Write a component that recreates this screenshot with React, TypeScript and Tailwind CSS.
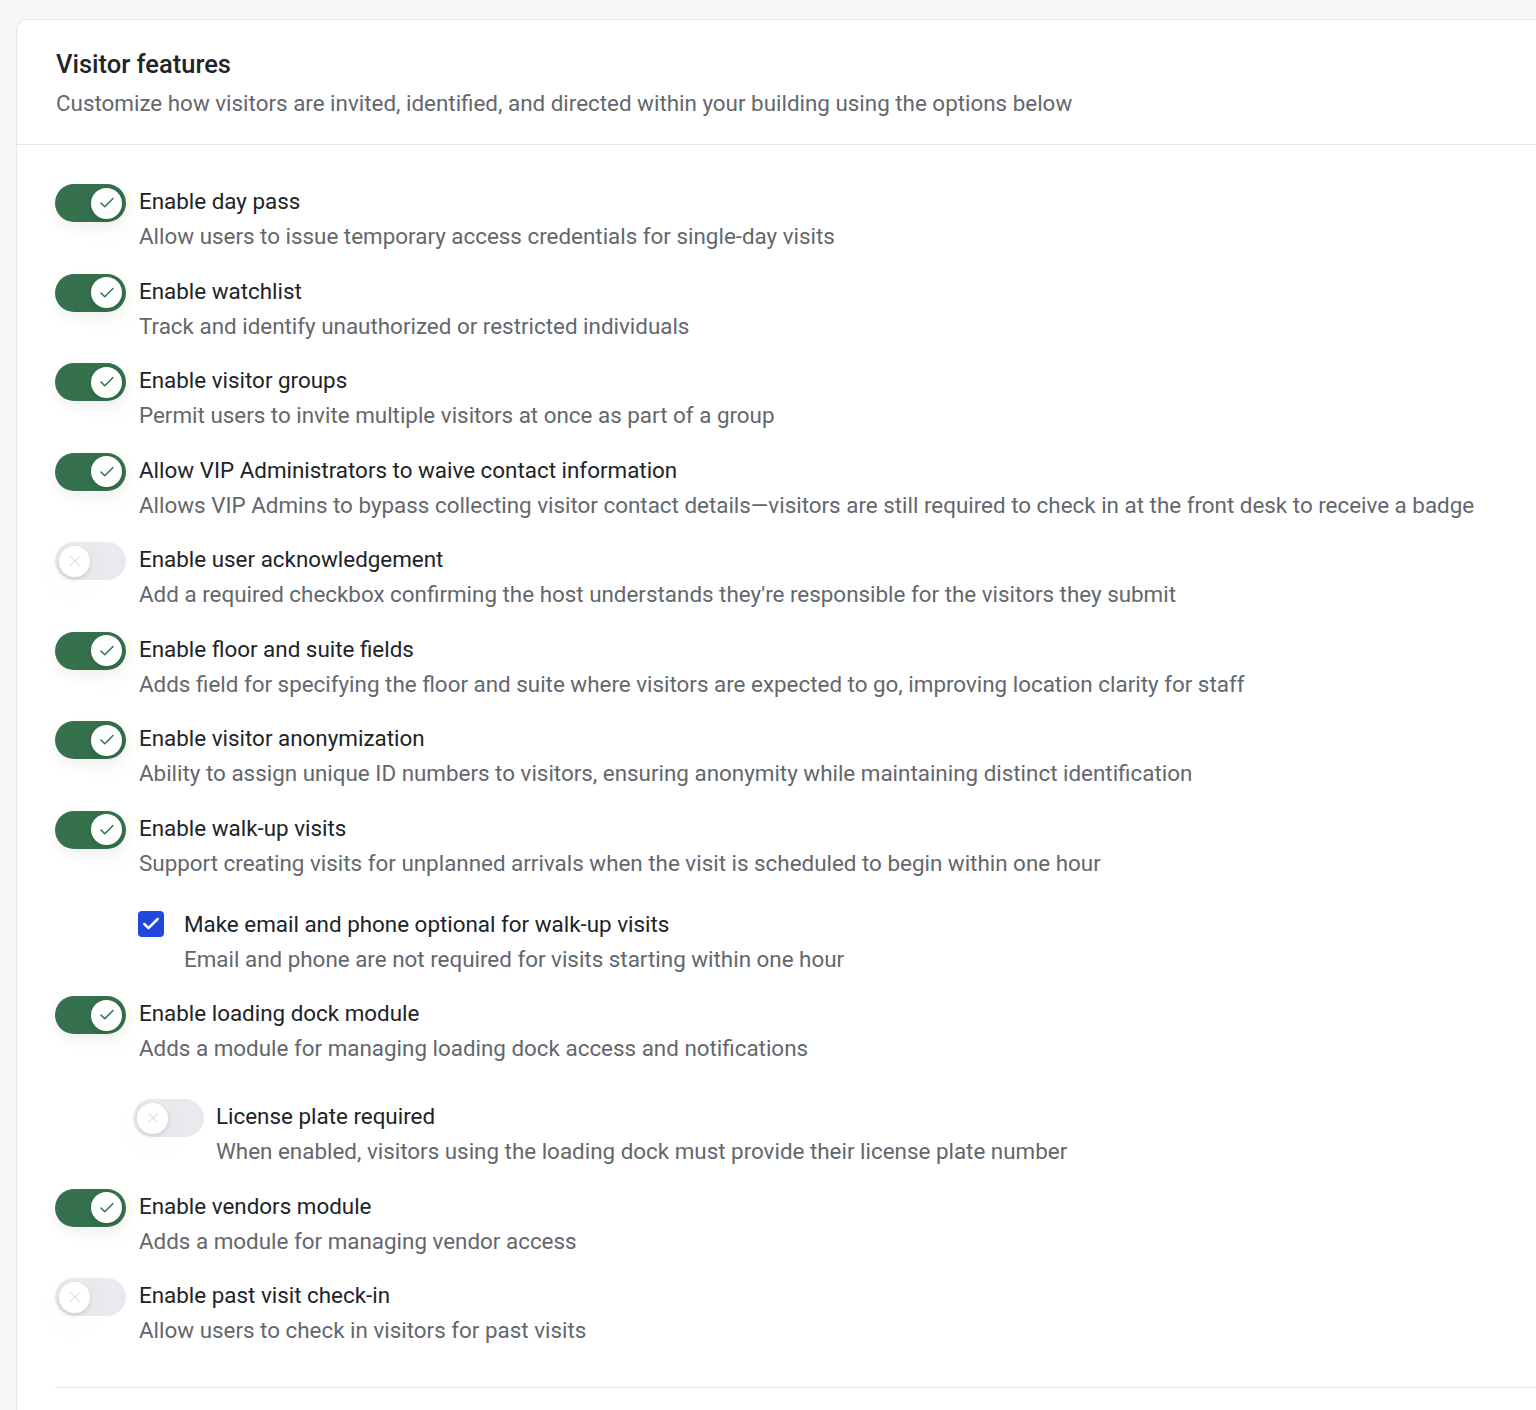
import { Check, X } from 'lucide-react';

type Item = {
  title: string;
  desc: string;
  on: boolean;
};

const items: Item[] = [
  { title: 'Enable day pass', desc: 'Allow users to issue temporary access credentials for single-day visits', on: true },
  { title: 'Enable watchlist', desc: 'Track and identify unauthorized or restricted individuals', on: true },
  { title: 'Enable visitor groups', desc: 'Permit users to invite multiple visitors at once as part of a group', on: true },
  {
    title: 'Allow VIP Administrators to waive contact information',
    desc: 'Allows VIP Admins to bypass collecting visitor contact details\u2014visitors are still required to check in at the front desk to receive a badge',
    on: true,
  },
  {
    title: 'Enable user acknowledgement',
    desc: "Add a required checkbox confirming the host understands they're responsible for the visitors they submit",
    on: false,
  },
  {
    title: 'Enable floor and suite fields',
    desc: 'Adds field for specifying the floor and suite where visitors are expected to go, improving location clarity for staff',
    on: true,
  },
  {
    title: 'Enable visitor anonymization',
    desc: 'Ability to assign unique ID numbers to visitors, ensuring anonymity while maintaining distinct identification',
    on: true,
  },
];

const Toggle = ({ on }: { on: boolean }) => {
  return (
    <div
      className={`relative flex h-[38px] w-[71px] shrink-0 items-center rounded-full px-[4px] ${
        on ? 'justify-end bg-[#34714c] shadow-[0_6px_14px_rgba(0,0,0,0.06)]' : 'justify-start bg-[#e9eaed]'
      }`}
    >
      <div className="flex h-[31px] w-[31px] items-center justify-center rounded-full bg-white shadow-[0_2px_5px_rgba(0,0,0,0.12),0_10px_50px_rgba(0,0,0,0.045)]">
        {on ? (
          <Check size={18} strokeWidth={2} className="text-[#34714c]" />
        ) : (
          <X size={18} strokeWidth={1.4} className="text-[#d6d7da]" />
        )}
      </div>
    </div>
  );
};

const Text = ({ title, desc }: { title: string; desc: string }) => (
  <div className="pt-[2px]">
    <div className="whitespace-nowrap text-[22.4px] leading-[30px] text-[#202327]">{title}</div>
    <div className="mt-[5px] whitespace-nowrap text-[22.4px] leading-[30px] text-[#63676d]">{desc}</div>
  </div>
);

const Row = ({ title, desc, on }: Item) => (
  <div className="flex items-start gap-[13px]">
    <Toggle on={on} />
    <Text title={title} desc={desc} />
  </div>
);

export default function App() {
  return (
    <div
      className="h-[1410px] overflow-hidden bg-[#f5f6f8] pl-[16px] pt-[19px]"
      style={{ fontFamily: 'Roboto, "Noto Sans", sans-serif' }}
    >
      <div className="w-[1560px] rounded-tl-[12px] border border-[#e5e7eb] bg-white pb-[60px]">
        <div className="border-b border-[#e7e8ea] px-[39px] pb-[26px] pt-[27px]">
          <h1 className="text-[25.5px] font-medium leading-[34px] text-[#212429]">Visitor features</h1>
          <p className="mt-[7px] text-[22.4px] leading-[30px] text-[#63676d]">
            Customize how visitors are invited, identified, and directed within your building using the options below
          </p>
        </div>

        <div className="pl-[38px] pt-[39px]">
          <div className="flex flex-col gap-[22.5px]">
            {items.map((it) => (
              <Row key={it.title} {...it} />
            ))}

            <Row
              title="Enable walk-up visits"
              desc="Support creating visits for unplanned arrivals when the visit is scheduled to begin within one hour"
              on
            />
            <div className="ml-[83px] mt-[6.5px] flex items-start gap-[20px]">
              <div className="mt-[4px] flex h-[26px] w-[26px] shrink-0 items-center justify-center rounded-[4px] bg-[#2147dc]">
                <Check size={20} strokeWidth={3} className="text-white" />
              </div>
              <Text
                title="Make email and phone optional for walk-up visits"
                desc="Email and phone are not required for visits starting within one hour"
              />
            </div>

            <Row
              title="Enable loading dock module"
              desc="Adds a module for managing loading dock access and notifications"
              on
            />
            <div className="ml-[78px] mt-[13.5px] flex items-start gap-[12px]">
              <Toggle on={false} />
              <Text
                title="License plate required"
                desc="When enabled, visitors using the loading dock must provide their license plate number"
              />
            </div>

            <Row title="Enable vendors module" desc="Adds a module for managing vendor access" on />
            <Row title="Enable past visit check-in" desc="Allow users to check in visitors for past visits" on={false} />
          </div>

          <div className="mt-[42px] border-b border-[#e7e8ea]" />
        </div>
      </div>
    </div>
  );
}
